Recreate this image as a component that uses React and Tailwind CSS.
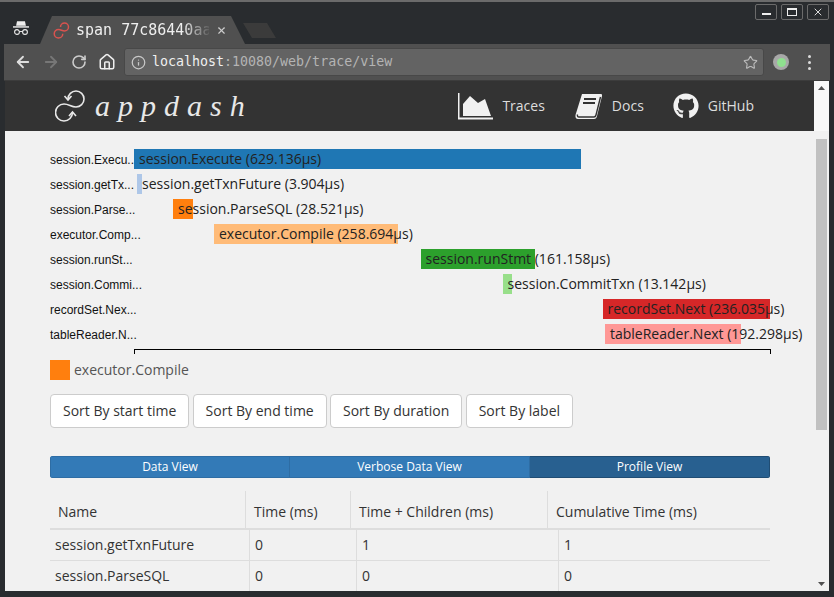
import React from 'react';
import { ArrowLeft, ArrowRight, RotateCw, House, Info, Star, X } from 'lucide-react';
import { FaGithub } from 'react-icons/fa';

const bars = [
  { label: 'session.Execu...', name: 'session.Execute (629.136µs)', x: 0, w: 447, color: '#1f77b4' },
  { label: 'session.getTx...', name: 'session.getTxnFuture (3.904µs)', x: 3, w: 3, color: '#aec7e8' },
  { label: 'session.Parse...', name: 'session.ParseSQL (28.521µs)', x: 39, w: 20, color: '#ff7f0e' },
  { label: 'executor.Comp...', name: 'executor.Compile (258.694µs)', x: 80, w: 184, color: '#ffbb78' },
  { label: 'session.runSt...', name: 'session.runStmt (161.158µs)', x: 286.5, w: 114.5, color: '#2ca02c' },
  { label: 'session.Commi...', name: 'session.CommitTxn (13.142µs)', x: 368.5, w: 9.5, color: '#98df8a' },
  { label: 'recordSet.Nex...', name: 'recordSet.Next (236.035µs)', x: 468.5, w: 167.5, color: '#d62728' },
  { label: 'tableReader.N...', name: 'tableReader.Next (192.298µs)', x: 471, w: 136, color: '#ff9896' },
];

const sortButtons = ['Sort By start time', 'Sort By end time', 'Sort By duration', 'Sort By label'];

const rows = [
  ['session.getTxnFuture', '0', '1', '1'],
  ['session.ParseSQL', '0', '0', '0'],
];

function Incognito() {
  return (
    <svg width="16" height="16" viewBox="0 0 18 17" fill="none">
      <path d="M4.5 1 H13.5 L14.5 6 H3.5 Z" fill="#eee" />
      <rect x="0" y="6.5" width="18" height="1.6" fill="#eee" />
      <circle cx="4.5" cy="13" r="2.7" stroke="#eee" strokeWidth="1.2" />
      <circle cx="13.5" cy="13" r="2.7" stroke="#eee" strokeWidth="1.2" />
      <path d="M7.2 12.5 H10.8" stroke="#eee" strokeWidth="1.1" />
    </svg>
  );
}

// same figure-eight as the appdash mark, without the arrow heads
function Favicon() {
  return (
    <svg width="17" height="17" viewBox="0 0 30 34" fill="none" stroke="#d9534f" strokeWidth="3">
      <path d="M13 10 A8 8 0 1 1 21 18 C16 18 14 15 9 15 A8.5 8.5 0 1 0 17.5 23.5" />
    </svg>
  );
}

function AppdashMark() {
  return (
    <svg width="32" height="34" viewBox="0 0 32 34" fill="none" stroke="#e8e8e8" strokeWidth="1.6">
      <path d="M13 10 A8 8 0 1 1 21 18 C16 18 14 15 9 15 A8.5 8.5 0 1 0 17.5 23.5" />
      <path d="M9.5 7 L13 11 L16.5 7" />
      <path d="M14 27 L17.5 23 L21 27" />
    </svg>
  );
}

function AreaIcon() {
  return (
    <svg width="35" height="27" viewBox="0 0 35 27" fill="#f1f1f1">
      <path d="M0 0 H1.5 V24.5 H35 V26.5 H0 Z" />
      <path d="M5 23 V11 L12 3 L20 10 L27 6 L33 23 Z" />
    </svg>
  );
}

function BookIcon() {
  return (
    <svg width="28" height="27" viewBox="0 0 28 27">
      <path d="M7 1 H26 Q27.5 1 27 3 L22 23 Q21.5 26 19 26 H3 Q0 26 0.5 22 Z" fill="#f1f1f1" />
      <path d="M2.5 21.5 Q2 24 4 24 H19 Q20.5 24 21 22 L25.5 4" fill="none" stroke="#333" strokeWidth="1.4" />
      <path d="M9 6 H21 M8 10 H20" stroke="#333" strokeWidth="2" />
    </svg>
  );
}

function NavLink({ icon, text, className = '' }) {
  return (
    <a className={`flex items-center gap-[9px] text-[14px] text-[#ddd] ${className}`}>
      {icon}
      <span className="pb-[2px]">{text}</span>
    </a>
  );
}

function Triangle({ up }) {
  return (
    <svg width="7" height="4" viewBox="0 0 7 4" fill="#505050">
      <path d={up ? 'M3.5 0 L7 4 H0 Z' : 'M0 0 H7 L3.5 4 Z'} />
    </svg>
  );
}

export default function App() {
  return (
    <div className="h-[597px] w-[834px] overflow-hidden bg-[#292c2f] border-t-2 border-[#6b6b6b] flex flex-col font-['Open_Sans',sans-serif]">
      {/* titlebar + tab strip */}
      <div className="h-[42px] flex shrink-0 pl-[13px] pr-[5px]">
        <div className="pt-[18px] w-[27px] shrink-0">
          <Incognito />
        </div>
        <div className="mt-[14px] h-[28px] w-[205px] shrink-0 bg-[#505050] [clip-path:polygon(0_100%,12px_0,191px_0,100%_100%)] flex items-center pl-[13px]">
          <Favicon />
          <span className="ml-[6px] w-[133px] overflow-hidden whitespace-nowrap text-[15px] text-[#eee] font-['DejaVu_Sans_Mono',monospace] [mask-image:linear-gradient(to_right,black_80%,transparent_102%)]">
            span 77c86440aa
          </span>
          <X size={11} strokeWidth={2.5} className="ml-[7px] text-[#ccc]" />
        </div>
        <div className="mt-[21px] ml-[-2px] h-[15px] w-[33px] shrink-0 bg-[#3b3b3b] [clip-path:polygon(0_0,24px_0,100%_100%,9px_100%)]" />
        <div className="ml-auto flex gap-[4px] pt-[2px] h-fit">
          <div className="w-[22px] h-[16px] rounded-[2px] border border-[#6b6b6b] flex items-center justify-center pt-[4px]">
            <div className="w-[9px] h-[2px] bg-[#eee]" />
          </div>
          <div className="w-[22px] h-[16px] rounded-[2px] border border-[#6b6b6b] flex items-center justify-center">
            <div className="w-[10px] h-[8px] border border-t-2 border-[#eee]" />
          </div>
          <div className="w-[22px] h-[16px] rounded-[2px] border border-[#6b6b6b] flex items-center justify-center">
            <X size={12} strokeWidth={1.8} className="text-[#eee]" />
          </div>
        </div>
      </div>

      {/* toolbar */}
      <div className="h-[37px] mx-[4px] shrink-0 bg-[#505050] border-b border-[#3c3c3c] flex items-center">
        <ArrowLeft size={18} strokeWidth={2.4} className="ml-[10px] text-[#dedede]" />
        <ArrowRight size={18} strokeWidth={2.4} className="ml-[10px] text-[#777]" />
        <RotateCw size={16} strokeWidth={2.4} className="ml-[11px] text-[#ccc]" />
        <House size={18} strokeWidth={2} className="ml-[11px] text-[#eee]" />
        <div className="ml-[8px] h-[28px] w-[640px] rounded-[3px] bg-[#636363] border border-[#484848] flex items-center pl-[6px] pr-[5px] font-['DejaVu_Sans_Mono',monospace] text-[13.3px]">
          <Info size={15} strokeWidth={2} className="text-[#c8c8c8]" />
          <span className="ml-[6px] text-[#f0f0f0]">localhost</span>
          <span className="text-[#b4b4b4]">:10080/web/trace/view</span>
          <Star size={15} strokeWidth={1.8} className="ml-auto text-[#bbb]" />
        </div>
        <div className="ml-[9px] w-[16px] h-[16px] rounded-full bg-[#a8a8a8] flex items-center justify-center">
          <div className="w-[9px] h-[9px] rounded-full bg-[#8fe08f]" />
        </div>
        <div className="ml-[19px] flex flex-col gap-[3px]">
          <div className="w-[3px] h-[3px] rounded-full bg-[#ddd]" />
          <div className="w-[3px] h-[3px] rounded-full bg-[#ddd]" />
          <div className="w-[3px] h-[3px] rounded-full bg-[#ddd]" />
        </div>
      </div>

      {/* page */}
      <div className="flex-1 min-h-0 mx-[5px] mb-[6px] flex">
        <div className="w-[809px] shrink-0 flex flex-col bg-[#f1f1f1] overflow-hidden">
          <nav className="h-[50px] shrink-0 bg-[#333] flex items-center pl-[50px] pr-[60px]">
            <AppdashMark />
            <span className="ml-[8px] text-[30px] leading-none italic text-[#e8e8e8] tracking-[8px] font-['Liberation_Serif',serif]">
              appdash
            </span>
            <NavLink className="ml-auto" icon={<AreaIcon />} text="Traces" />
            <NavLink className="ml-[30px]" icon={<BookIcon />} text="Docs" />
            <NavLink className="ml-[29px]" icon={<FaGithub size={26} className="text-[#f1f1f1]" />} text="GitHub" />
          </nav>

          <div className="pl-[45px] pt-[18px] w-[765px]">
            {bars.map((b) => (
              <div key={b.label} className="flex h-5 mb-[5px] items-center">
                <div className="w-[84px] shrink-0 pt-[2px] text-[12px] text-[#111] font-['Liberation_Sans',sans-serif] whitespace-nowrap">
                  {b.label}
                </div>
                <div
                  className="h-5 shrink-0 whitespace-nowrap pl-[5px] text-[14px] leading-5 text-[#222]"
                  style={{ marginLeft: b.x, width: b.w, backgroundColor: b.color }}
                >
                  {b.name}
                </div>
              </div>
            ))}
            <div className="ml-[84px] w-[637px] h-[5px] border-t border-x border-black" />

            <div className="mt-[6px] flex items-center h-5">
              <div className="w-5 h-5 bg-[#ff7f0e]" />
              <span className="ml-1 pb-[2px] text-[14px] text-[#555]">executor.Compile</span>
            </div>

            <div className="mt-[14px] flex gap-[3.3px]">
              {sortButtons.map((s) => (
                <button key={s} className="h-[34px] px-3 pb-[2px] bg-white border border-[#ccc] rounded-[4px] text-[14px] text-[#333]">
                  {s}
                </button>
              ))}
            </div>

            <div className="mt-[28px] h-[22px] flex rounded-[3px] overflow-hidden text-[12px] text-white">
              <div className="w-[240px] bg-[#337ab7] border border-[#2e6da4] flex items-center justify-center">Data View</div>
              <div className="w-[240px] bg-[#337ab7] border border-l-0 border-[#2e6da4] flex items-center justify-center">Verbose Data View</div>
              <div className="w-[240px] bg-[#286090] border border-l-0 border-[#204d74] flex items-center justify-center">Profile View</div>
            </div>

            <div className="mt-[13px] text-[14px] text-[#333]">
              <div className="grid grid-cols-[195px_105px_197px_223px] h-[39px] border-b-2 border-[#ddd] items-stretch">
                <div className="px-2 pt-[3px] flex items-center">Name</div>
                <div className="px-2 pt-[3px] flex items-center border-l border-[#ddd]">Time (ms)</div>
                <div className="px-2 pt-[3px] flex items-center border-l border-[#ddd]">Time + Children (ms)</div>
                <div className="px-2 pt-[3px] flex items-center border-l border-[#ddd]">Cumulative Time (ms)</div>
              </div>
              {rows.map((r) => (
                <div key={r[0]} className="grid grid-cols-[199px_107px_202px_212px] h-[31px] border-b border-[#ddd]">
                  <div className="px-[5px] pb-[2px] flex items-center">{r[0]}</div>
                  <div className="px-[5px] pb-[2px] flex items-center border-l border-[#ddd]">{r[1]}</div>
                  <div className="px-[5px] pb-[2px] flex items-center border-l border-[#ddd]">{r[2]}</div>
                  <div className="px-[5px] pb-[2px] flex items-center border-l border-[#ddd]">{r[3]}</div>
                </div>
              ))}
            </div>
          </div>
        </div>

        {/* scrollbar */}
        <div className="w-[15px] shrink-0 bg-[#f1f1f1] flex flex-col items-center">
          <div className="h-[50px] pt-[5px] flex justify-center w-full bg-[#f8f8f8]">
            <div className="h-fit"><Triangle up /></div>
          </div>
          <div className="mt-2 w-[11px] h-[291px] bg-[#c1c1c1]" />
          <div className="mt-auto pb-[5px]"><Triangle /></div>
        </div>
      </div>
    </div>
  );
}
